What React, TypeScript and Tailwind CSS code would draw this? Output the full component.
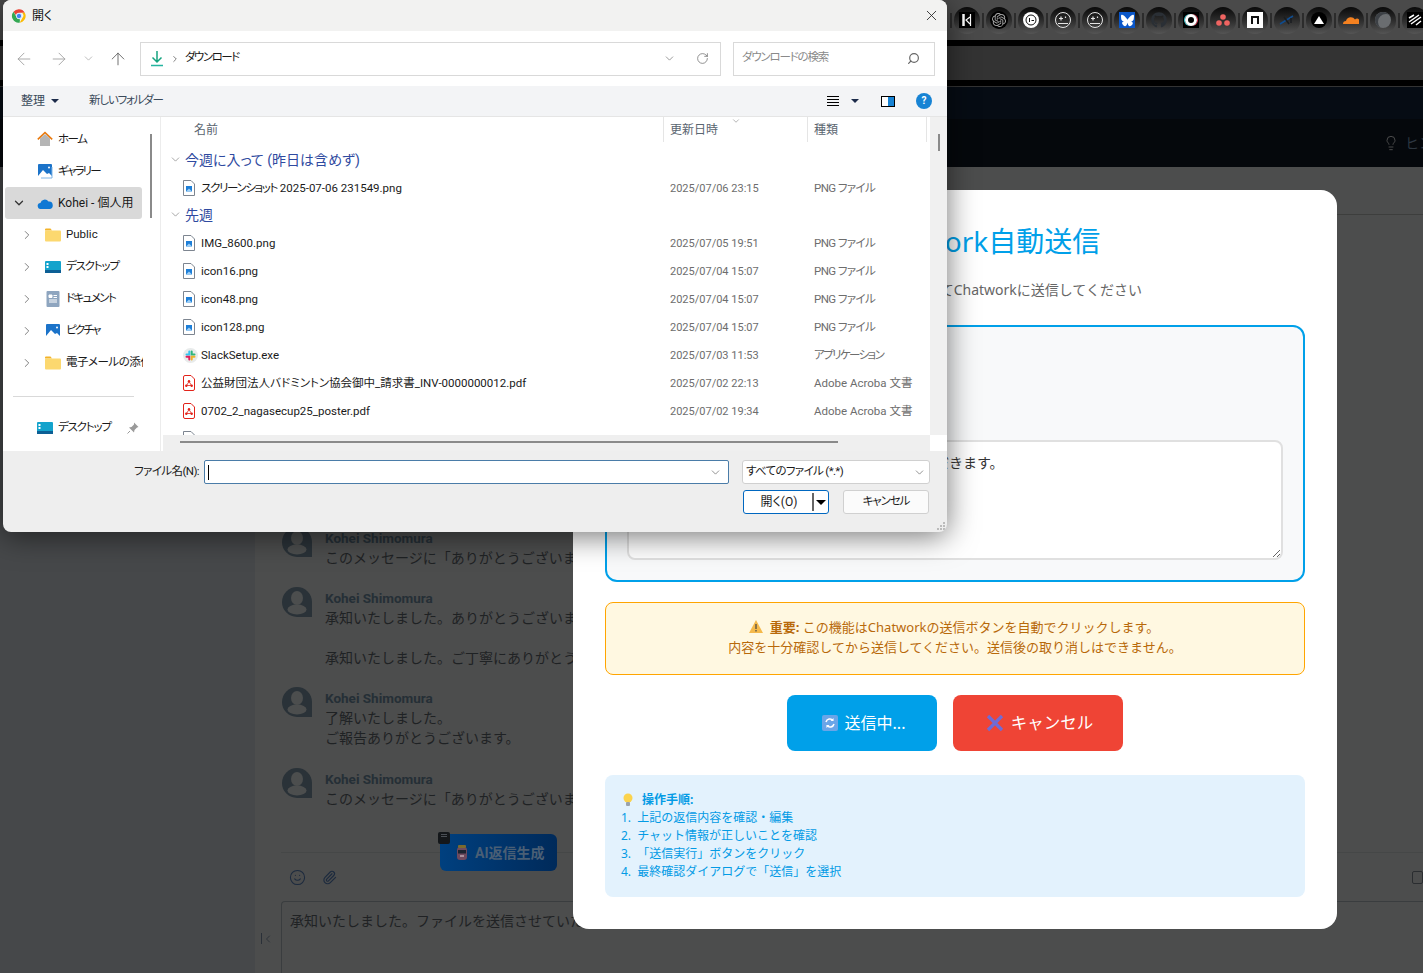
import React from 'react';
import { ArrowLeft, ArrowRight, ArrowUp, ChevronDown, ChevronRight, Lightbulb, Paperclip, RotateCw, Search, Smile, X } from 'lucide-react';
import { FaGithub } from 'react-icons/fa';
import { SiBluesky, SiOpenai } from 'react-icons/si';

const ChromeLogo = () => (
    <svg width="16" height="16" viewBox="0 0 48 48">
        <path d="M24 4a20 20 0 0 1 17.3 10H24a10 10 0 0 0-9.6 7L7.5 11.5A20 20 0 0 1 24 4z" fill="#ea4335" />
        <path d="M41.3 14A20 20 0 0 1 26 43.9L34 30a10 10 0 0 0-1.5-16z" fill="#fbbc04" />
        <path d="M26 43.9A20 20 0 0 1 7.5 11.5L16 26a10 10 0 0 0 11 7.5z" fill="#34a853" />
        <circle cx="24" cy="24" r="8" fill="#4285f4" stroke="#fff" strokeWidth="2" />
    </svg>
);

const DownloadIcon = () => (
    <svg width="14" height="16" viewBox="0 0 14 16" fill="none" stroke="#14a37f" strokeWidth="1.5">
        <path d="M7 0v11M2.5 6.5 7 11l4.5-4.5" />
        <path d="M1 14.5h12" stroke="#25b5a0" strokeWidth="1.6" />
    </svg>
);

const HomeIcon = () => (
    <svg width="16" height="16" viewBox="0 0 16 16">
        <path d="M3 7.5 8 3l5 4.5V15H3z" fill="#b5b5b5" />
        <path d="M.8 8.3 8 1.5l7.2 6.8" fill="none" stroke="#e8780c" strokeWidth="1.6" />
    </svg>
);

const PictureIcon = ({ frame = false }: { frame?: boolean }) => (
    <svg width="16" height="16" viewBox="0 0 16 16">
        <rect x="1" y="1" width="14" height="14" rx="1" fill="#1b73c9" />
        <path d="M1 13 6 7l4 4 2-1 3 3v2H1z" fill="#fff" />
        <circle cx="12" cy="4.5" r="1" fill="#fff" />
        {frame && <path d="M15 4v11H4" fill="none" stroke="#7fb5e6" strokeWidth="1" />}
    </svg>
);

const CloudIcon = () => (
    <svg width="16" height="11" viewBox="0 0 16 11">
        <path d="M4 11a3 3 0 0 1-.6-6A4.5 4.5 0 0 1 11.5 3.6 3.7 3.7 0 0 1 12.5 11z" fill="#0f78d4" />
    </svg>
);

const FolderIcon = () => (
    <svg width="16" height="14" viewBox="0 0 16 14">
        <path d="M0 1.5A1 1 0 0 1 1 .5h4.5l1.5 2H0z" fill="#f3b32a" />
        <rect y="2.5" width="16" height="11" rx="1" fill="#fcd86f" />
    </svg>
);

const DesktopIcon = () => (
    <svg width="16" height="12" viewBox="0 0 16 12">
        <rect width="16" height="11" rx="1" fill="#14a3cc" />
        <rect y="9" width="16" height="3" fill="#0c5f95" />
        <rect x="1.5" y="2" width="2" height="2" fill="#fff" />
        <rect x="1.5" y="5" width="2" height="2" fill="#fff" />
    </svg>
);

const DocumentIcon = () => (
    <svg width="14" height="16" viewBox="0 0 14 16">
        <rect width="13" height="16" rx="1" x=".5" fill="#8ea5bf" />
        <path d="M3 4h3v2.5H3zM7.5 4.5H11M7.5 6.500H11M3 9h8M3 11h8" stroke="#fff" strokeWidth="1" fill="#fff" />
    </svg>
);

const PinIcon = () => (
    <svg width="12" height="12" viewBox="0 0 12 12" fill="#9a9a9a">
        <path d="M7 .5 11.5 5l-1.5.5-2.5 2.5-.5 2.5-5-5L4.5 5 7 2.5z" />
        <path d="M3 9 .5 11.5" stroke="#9a9a9a" fill="none" />
    </svg>
);

const PngFile = () => (
    <svg width="12" height="16" viewBox="0 0 12 16" fill="none">
        <path d="M.5.5h7.5l3.5 3.5v11.5H.5z" fill="#fff" stroke="#7d8590" />
        <rect x="3" y="6" width="6" height="5.5" fill="#1e7fd8" />
        <path d="M3 11.5l3-3 3 3z" fill="#9fd0f5" />
    </svg>
);

const PdfFile = () => (
    <svg width="12" height="16" viewBox="0 0 12 16" fill="none">
        <path d="M2 .5h6l3.5 3.5v10a1.5 1.5 0 0 1-1.5 1.5H2A1.5 1.5 0 0 1 .5 14V2A1.5 1.5 0 0 1 2 .5z" fill="#fff" stroke="#e2231a" />
        <path d="M6 6.5 3.5 10.5M6 6.5l2.5 4M3.5 10.5h5" stroke="#e2231a" strokeWidth=".8" />
        <circle cx="6" cy="6.3" r="1.2" fill="#e2231a" />
        <circle cx="3.3" cy="10.7" r="1.2" fill="#e2231a" />
        <circle cx="8.7" cy="10.7" r="1.2" fill="#e2231a" />
    </svg>
);

const SlackFile = () => (
    <svg width="15" height="15" viewBox="0 0 15 15">
        <circle cx="7.5" cy="7.5" r="7.5" fill="#e8ebeb" />
        <path d="M6.3 3.5v3H3.5" stroke="#36c5f0" strokeWidth="2" fill="none" strokeLinecap="round" />
        <path d="M8.7 3.5v3h2.8" stroke="#2eb67d" strokeWidth="2" fill="none" strokeLinecap="round" />
        <path d="M6.3 11.5V8.7H3.5" stroke="#e01e5a" strokeWidth="2" fill="none" strokeLinecap="round" />
        <path d="M8.7 11.5V8.7h2.8" stroke="#ecb22e" strokeWidth="2" fill="none" strokeLinecap="round" />
    </svg>
);

const Avatar = () => (
    <svg width="30" height="30" viewBox="0 0 30 30" className="-mt-[2px] shrink-0">
        <path d="M15 0a15 15 0 0 1 15 15v15H15A15 15 0 0 1 15 0z" fill="#2a3238" />
        <ellipse cx="15" cy="11" rx="6" ry="7" fill="#4c4e4e" />
        <ellipse cx="15" cy="22.5" rx="9.5" ry="5" fill="#4c4e4e" />
    </svg>
);

const RefreshEmoji = () => (
    <svg width="16" height="16" viewBox="0 0 16 16" fill="none">
        <rect width="16" height="16" rx="2" fill="#6aa5e8" />
        <path d="M4 7a4 4 0 0 1 7-1.5M12 9a4 4 0 0 1-7 1.5" stroke="#fff" strokeWidth="1.5" />
        <path d="M11.5 3v3h-3M4.5 13v-3h3" fill="#fff" />
    </svg>
);

const CrossEmoji = () => (
    <svg width="18" height="18" viewBox="0 0 18 18">
        <path d="M2 2l14 14M16 2 2 16" stroke="#6f6bd6" strokeWidth="3.2" />
    </svg>
);

const WarnEmoji = () => (
    <svg width="14" height="13" viewBox="0 0 14 13">
        <path d="M7 0 14 13H0z" fill="#f5b94a" />
        <path d="M7 4v5M7 10v1.5" stroke="#444" strokeWidth="1.2" />
    </svg>
);

const BulbEmoji = () => (
    <svg width="10" height="14" viewBox="0 0 10 14">
        <circle cx="5" cy="5" r="4.5" fill="#fbd34d" />
        <rect x="3" y="9" width="4" height="4" rx="1" fill="#9aa3ad" />
    </svg>
);

const BotEmoji = () => (
    <svg width="14" height="17" viewBox="0 0 14 17">
        <rect x="2" y="3" width="10" height="13" rx="3" fill="#6e4a5e" />
        <rect x="3" y="6" width="8" height="3.5" fill="#1c2430" />
        <rect x="3" y="1" width="8" height="3" rx="1" fill="#7a6a2e" />
        <rect x="5" y="11" width="4" height="2" fill="#a8909c" />
    </svg>
);

const SparkleFace = () => (
    <svg width="16" height="16" viewBox="0 0 16 16" fill="none" stroke="#e5e5e5">
        <circle cx="8" cy="8" r="7.5" />
        <path d="M3 11.5h10" />
        <path d="M6 4.5v4M4 6.5h4" strokeWidth="1.2" />
        <path d="M10.5 4.5v1.5" strokeWidth="1.2" />
    </svg>
);

// toolbar icons in the browser bar, one glyph each
const barIcons: React.ReactNode[] = [
    <span key="n" className="flex h-4 w-4 items-center justify-center bg-black">
        <svg width="10" height="12" viewBox="0 0 10 12" fill="none" stroke="#fff"><path d="M1.5 0v12" strokeWidth="2.5" /><path d="M8.5 0v12M8 3 4 6l4 4" strokeWidth="1.2" /></svg>
    </span>,
    <span key="o" className="flex h-[18px] w-[18px] items-center justify-center rounded-full bg-black"><SiOpenai size={14} color="#a8a8a8" /></span>,
    <span key="w" className="flex h-4 w-4 items-center justify-center rounded-full bg-white">
        <svg width="12" height="12" viewBox="0 0 12 12" fill="none" stroke="#111"><circle cx="6" cy="6" r="5" /><path d="M4.5 4v4M6.5 6.5H9" /></svg>
    </span>,
    <SparkleFace key="s1" />,
    <SparkleFace key="s2" />,
    <span key="b" className="flex h-4 w-4 items-center justify-center bg-[#0a56c8]"><SiBluesky size={13} color="#fff" /></span>,
    <FaGithub key="g" size={16} color="#2a2f35" />,
    <span key="t" className="flex h-4 w-4 items-center justify-center bg-black">
        <span className="h-3 w-3 rounded-full border-[3px] border-white shadow-[1px_0_0_#e5364f,-1px_0_0_#3cd6e0]" />
    </span>,
    <svg key="a" width="14" height="12" viewBox="0 0 14 12" fill="#ef6461"><circle cx="7" cy="3" r="2.8" /><circle cx="3" cy="9" r="2.8" /><circle cx="11" cy="9" r="2.8" /></svg>,
    <span key="nn" className="flex h-4 w-4 items-center justify-center bg-white">
        <svg width="8" height="8" viewBox="0 0 8 8" fill="none" stroke="#111" strokeWidth="2"><path d="M1 8V1h6v7" /></svg>
    </span>,
    <svg key="x" width="16" height="10" viewBox="0 0 16 10" fill="none"><path d="M1 9 14 1" stroke="#0f4c8f" strokeWidth="1.5" /><path d="M5 2l5 7M12 3v5" stroke="#1a1d20" strokeWidth="1.5" /></svg>,
    <span key="v" className="flex h-4 w-4 items-center justify-center rounded-full bg-black">
        <span className="h-0 w-0 border-x-[5px] border-b-[8px] border-x-transparent border-b-white" />
    </span>,
    <svg key="c" width="16" height="8" viewBox="0 0 16 8"><path d="M0 8a3 3 0 0 1 3-3 5 5 0 0 1 9-1.5A3 3 0 0 1 16 8z" fill="#f48120" /></svg>,
    <span key="gl" className="h-4 w-4 rounded-full bg-[#6a6d70] shadow-[inset_3px_2px_0_#3c4045]" />,
    <span key="z" className="flex h-4 w-4 items-center justify-center bg-black">
        <svg width="14" height="12" viewBox="0 0 14 12" fill="none" stroke="#fff" strokeWidth="1.5"><path d="M1 4 6 1M1 8l10-7M3 10l10-7M8 11l5-4" /></svg>
    </span>,
];

const navItems = [
    { label: 'ホーム', icon: <HomeIcon />, tight: 'tracking-[-1.5px]' },
    { label: 'ギャラリー', icon: <PictureIcon frame />, tight: 'tracking-[-1.8px]' },
];

const treeItems = [
    { label: 'Public', icon: <FolderIcon />, tight: '' },
    { label: 'デスクトップ', icon: <DesktopIcon />, tight: 'tracking-[-1.2px]' },
    { label: 'ドキュメント', icon: <DocumentIcon />, tight: 'tracking-[-1.6px]' },
    { label: 'ピクチャ', icon: <PictureIcon />, tight: 'tracking-[-1.8px]' },
    { label: '電子メールの添付ファイル', icon: <FolderIcon />, tight: 'tracking-[-0.5px]' },
];

const pngType = { type: 'PNG ファイル', typeTight: 'tracking-[-0.6px]', icon: <PngFile /> };
const pdfType = { type: 'Adobe Acroba 文書', typeTight: '', icon: <PdfFile /> };

const thisWeek = [{ name: '231549.png', prefix: 'スクリーンショット', date: '2025/07/06 23:15', ...pngType }];

const lastWeek = [
    { name: 'IMG_8600.png', date: '2025/07/05 19:51', ...pngType },
    { name: 'icon16.png', date: '2025/07/04 15:07', ...pngType },
    { name: 'icon48.png', date: '2025/07/04 15:07', ...pngType },
    { name: 'icon128.png', date: '2025/07/04 15:07', ...pngType },
    { name: 'SlackSetup.exe', date: '2025/07/03 11:53', type: 'アプリケーション', typeTight: 'tracking-[-1.6px]', icon: <SlackFile /> },
    { name: '公益財団法人バドミントン協会御中_請求書_INV-0000000012.pdf', date: '2025/07/02 22:13', ...pdfType },
    { name: '0702_2_nagasecup25_poster.pdf', date: '2025/07/02 19:34', ...pdfType },
];

type FileItem = { name: string; prefix?: string; date: string; type: string; typeTight: string; icon: React.ReactNode };

const messages = [
    { lines: ['このメッセージに「ありがとうございます」とリアクションしました。'] },
    { lines: ['承知いたしました。ありがとうございます。', '\u00a0', '承知いたしました。ご丁寧にありがとうございます。'] },
    { lines: ['了解いたしました。', 'ご報告ありがとうございます。'] },
    { lines: ['このメッセージに「ありがとうございます」とリアクションしました。'] },
];

const steps = ['1. 上記の返信内容を確認・編集', '2. チャット情報が正しいことを確認', '3. 「送信実行」ボタンをクリック', '4. 最終確認ダイアログで「送信」を選択'];

const FileRow = ({ file }: { file: FileItem }) => (
    <div className="grid h-7 grid-cols-[500px_144px_120px] items-center">
        <div className="flex items-center whitespace-pre pl-5 text-[11.5px] text-[#1a1a1a]">
            <span className="flex w-[18px] shrink-0 justify-start">{file.icon}</span>
            <span className="pt-[2px]">
                {file.prefix && <span className="tracking-[-1.35px]">{file.prefix}</span>}
                {file.prefix && ' 2025-07-06 '}
                {file.name}
            </span>
        </div>
        <div className="pl-[7px] pt-[2px] text-[11px] text-[#6d6d6d]">{file.date}</div>
        <div className={`whitespace-nowrap pl-[7px] pt-[2px] text-[11.5px] text-[#6d6d6d] ${file.typeTight}`}>{file.type}</div>
    </div>
);

const GroupRow = ({ label }: { label: string }) => (
    <div className="flex h-[27px] items-center gap-[3px] pb-[2px] pl-[6px] text-sm text-[#2f4aa0]">
        <ChevronDown size={13} strokeWidth={1.2} className="text-[#777]" />
        {label}
    </div>
);

const FileDialog = () => (
    <div className="absolute left-[3px] top-0 flex h-[532px] w-[944px] flex-col overflow-hidden rounded-lg bg-[#eeeeee] font-['Roboto','Noto_Sans_CJK_JP',sans-serif] shadow-[0_4px_30px_rgba(0,0,0,0.55)] [font-feature-settings:'palt']">
        <div className="flex h-[31px] shrink-0 items-center justify-between bg-[#f2f2f1] pl-2 pr-[7px]">
            <div className="flex items-center gap-[5px] text-xs text-[#111]">
                <ChromeLogo />
                開く
            </div>
            <X size={17} strokeWidth={1.2} className="text-[#222]" />
        </div>

        <div className="flex h-[55px] shrink-0 items-center bg-white pl-[11px] pr-3">
            <ArrowLeft size={20} strokeWidth={1} className="text-[#9a9a9a]" />
            <ArrowRight size={20} strokeWidth={1} className="ml-[15px] text-[#9a9a9a]" />
            <ChevronDown size={13} strokeWidth={1.2} className="ml-[13px] text-[#9a9a9a]" />
            <ArrowUp size={20} strokeWidth={1} className="ml-[13px] text-[#555]" />
            <div className="ml-[12px] flex h-[34px] w-[581px] items-center border border-[#d9d9d9] pl-[9px] pr-[11px]">
                <DownloadIcon />
                <ChevronRight size={10} strokeWidth={1.8} className="ml-[6px] text-[#555]" />
                <span className="ml-[5px] pb-[2px] text-[11.5px] tracking-[-1.5px] text-[#1a1a1a]">ダウンロード</span>
                <ChevronDown size={13} strokeWidth={1.2} className="ml-auto text-[#666]" />
                <RotateCw size={13} strokeWidth={1.3} className="ml-5 text-[#666]" />
            </div>
            <div className="ml-3 flex h-[34px] w-[202px] items-center justify-between border border-[#d9d9d9] pl-2 pr-[14px] text-[11.5px] text-[#8a8a8a]">
                <span className="pb-[2px] tracking-[-1.2px]">ダウンロードの検索</span>
                <Search size={13} strokeWidth={2.2} className="scale-x-[-1] text-[#666]" />
            </div>
        </div>

        <div className="flex h-[31px] shrink-0 items-center border-b border-[#e5e5e5] bg-[#f3f4f6] pl-[18px] pr-[15px] text-xs text-[#3a4a5a]">
            <span>整理</span>
            <span className="ml-[6px] h-0 w-0 border-x-4 border-t-[4px] border-x-transparent border-t-[#1c2b4a]" />
            <span className="ml-[30px] text-[11.5px] tracking-[-1.2px]">新しいフォルダー</span>
            <div className="ml-auto flex items-center">
                <span className="flex w-[12px] flex-col gap-[2px]">
                    <span className="h-px bg-black" />
                    <span className="h-px bg-black" />
                    <span className="h-px bg-black" />
                    <span className="h-px bg-black" />
                </span>
                <span className="ml-[12px] h-0 w-0 border-x-4 border-t-[4px] border-x-transparent border-t-[#1c2b4a]" />
                <span className="ml-[22px] flex h-[11px] w-[14px] justify-end border border-black bg-white">
                    <span className="w-[6px] bg-[#1783d4]" />
                </span>
                <span className="ml-[21px] flex h-4 w-4 items-center justify-center rounded-full bg-[#1783d4] text-[10px] font-bold text-white">?</span>
            </div>
        </div>

        <div className="flex h-[334px] shrink-0 bg-white">
            <div className="w-[140px] shrink-0 overflow-hidden pl-[2px] pr-px pt-[6px]">
                {navItems.map((item) => (
                    <div key={item.label} className="flex h-8 items-center gap-[5px] pl-[32px] text-[11.5px] text-[#1a1a1a]">
                        {item.icon}
                        <span className={`pt-[2px] ${item.tight}`}>{item.label}</span>
                    </div>
                ))}
                <div className="flex h-8 items-center rounded-[3px] bg-[#d9d9d9] pl-[7px] text-xs text-[#1a1a1a]">
                    <ChevronDown size={14} strokeWidth={2.2} className="text-[#333]" />
                    <span className="ml-[11px] flex items-center gap-[5px] whitespace-nowrap"><CloudIcon /> Kohei - 個人用</span>
                </div>
                {treeItems.map((item) => (
                    <div key={item.label} className="flex h-8 items-center whitespace-nowrap pl-[15px] text-[11.5px] text-[#1a1a1a]">
                        <ChevronRight size={14} strokeWidth={1.6} className="shrink-0 text-[#777]" />
                        <span className="ml-[11px] flex w-4 shrink-0 justify-center">{item.icon}</span>
                        <span className={`ml-[5px] ${item.tight}`}>{item.label}</span>
                    </div>
                ))}
                <div className="ml-[8px] mr-[8px] mt-[17px] h-px bg-[#d9d9d9]" />
                <div className="mt-[15px] flex h-8 items-center gap-[5px] whitespace-nowrap pl-[32px] text-[11.5px] text-[#1a1a1a]">
                    <DesktopIcon />
                    <span className="tracking-[-1.2px]">デスクトップ</span>
                    <span className="ml-auto pr-[3px]"><PinIcon /></span>
                </div>
            </div>
            <div className="w-[17px] shrink-0 pl-[7px] pt-[17px]">
                <div className="h-[84px] w-[2px] bg-[#8a8a8a]" />
            </div>
            <div className="w-[3px] shrink-0 border-l border-[#ececec]" />
            <div className="flex min-w-0 flex-1 flex-col">
                <div className="min-h-0 flex-1 overflow-hidden">
                    <div className="grid h-[25px] grid-cols-[500px_144px_120px] text-xs text-[#5a6570]">
                        <div className="pl-[31px] pt-[5px]">名前</div>
                        <div className="relative border-l border-[#e5e5e5] pl-[6px] pt-[5px]">
                            更新日時
                            <ChevronDown size={10} strokeWidth={1.3} className="absolute right-[66px] -top-[1px] text-[#777]" />
                        </div>
                        <div className="border-x border-[#e5e5e5] pl-[6px] pt-[5px]">種類</div>
                    </div>
                    <div className="pt-[5px]">
                        <GroupRow label="今週に入って (昨日は含めず)" />
                        {thisWeek.map((file) => <FileRow key={file.name} file={file} />)}
                        <GroupRow label="先週" />
                        {lastWeek.map((file) => <FileRow key={file.name} file={file} />)}
                        <div className="flex h-7 items-center pl-5"><PngFile /></div>
                    </div>
                </div>
                <div className="h-4 shrink-0 bg-[#efefef] pl-[17px] pt-[6px]">
                    <div className="h-[2px] w-[658px] bg-[#8a8a8a]" />
                </div>
            </div>
            <div className="flex w-[17px] shrink-0 flex-col bg-[#f0f0f0]">
                <div className="ml-[8px] mt-[17px] h-[17px] w-[2px] bg-[#8a8a8a]" />
                <div className="mt-auto h-4 bg-white" />
            </div>
        </div>

        <div className="relative flex-1 pr-[17px] pt-[9px]">
            <div className="flex items-center justify-end">
                <span className="text-[11.5px] tracking-[-0.6px] text-[#1a1a1a]">ファイル名(N):</span>
                <div className="ml-[5px] flex h-6 w-[525px] items-center rounded-[2px] border border-[#4a7ca8] bg-white pl-[3px] pr-[6px]">
                    <span className="h-[15px] w-px bg-black" />
                    <ChevronDown size={13} strokeWidth={1.3} className="ml-auto text-[#666]" />
                </div>
                <div className="ml-[13px] flex h-6 w-[188px] items-center justify-between rounded-[3px] border border-[#d0d0d0] bg-white pl-[3px] pr-[3px] text-[11.5px] text-[#1a1a1a]">
                    <span className="tracking-[-0.65px]">すべてのファイル (*.*)</span>
                    <ChevronDown size={13} strokeWidth={1.3} className="text-[#666]" />
                </div>
            </div>
            <div className="mt-[6px] flex justify-end gap-[14px] pr-px">
                <div className="flex h-6 w-[86px] items-center rounded-[3px] border border-[#0067c0] bg-white text-xs text-[#1a1a1a]">
                    <span className="flex-1 pl-[2px] text-center">開く(O)</span>
                    <span className="h-[18px] w-[2px] bg-[#666]" />
                    <span className="mx-[2px] h-0 w-0 border-x-[5px] border-t-[5px] border-x-transparent border-t-black" />
                </div>
                <div className="flex h-6 w-[86px] items-center justify-center rounded-[3px] border border-[#d0d0d0] bg-[#fbfbfb] text-[11.5px] tracking-[-1.1px] text-[#1a1a1a]">キャンセル</div>
            </div>
            <div className="absolute bottom-[2px] right-[2px] grid grid-cols-3 gap-px">
                <span className="col-start-3 h-[2px] w-[2px] bg-[#bbb]" />
                <span className="col-start-2 h-[2px] w-[2px] bg-[#bbb]" />
                <span className="h-[2px] w-[2px] bg-[#bbb]" />
                <span className="h-[2px] w-[2px] bg-[#bbb]" />
                <span className="h-[2px] w-[2px] bg-[#bbb]" />
                <span className="h-[2px] w-[2px] bg-[#bbb]" />
            </div>
        </div>
    </div>
);

const SendModal = () => (
    <div className="absolute left-[573px] top-[190px] flex h-[739px] w-[764px] flex-col rounded-2xl bg-white px-8 pt-[30px]">
        <h2 className="pl-[10px] text-center text-[28px] font-normal leading-[42px] text-[#00a0e9]">🚀 Chatwork自動送信</h2>
        <p className="mt-[17px] pl-[4px] text-center text-sm leading-[21px] text-[#666]">返信内容をご確認・編集してChatworkに送信してください</p>
        <div className="mt-[25px] flex h-[257px] flex-col justify-end rounded-xl border-2 border-[#00a0e9] bg-[#f8f9fa] px-5 pb-5">
            <textarea
                readOnly
                defaultValue="承知いたしました。ファイルを送信させていただきます。"
                className="h-[120px] w-full rounded-lg border-2 border-[#e0e0e0] bg-white px-3 py-[10px] text-sm leading-[21px] text-[#333] outline-none"
            />
        </div>
        <div className="mt-5 flex h-[73px] flex-col items-center justify-center rounded-lg border border-[#ffa500] bg-[#fff8e1] pb-1 text-[13px] leading-5 text-[#b8690a]">
            <p className="flex items-center gap-[7px] pr-[2px]"><WarnEmoji /><span><strong>重要:</strong> この機能はChatworkの送信ボタンを自動でクリックします。</span></p>
            <p>内容を十分確認してから送信してください。送信後の取り消しはできません。</p>
        </div>
        <div className="mt-5 flex justify-center gap-4">
            <button className="flex h-14 w-[150px] items-center justify-center gap-[7px] rounded-lg bg-[#00a0e9] pl-[3px] text-base text-white">
                <RefreshEmoji /> 送信中...
            </button>
            <button className="flex h-14 w-[170px] items-center justify-center gap-[7px] rounded-lg bg-[#ef4435] pl-[3px] text-[16.5px] text-white">
                <CrossEmoji /> キャンセル
            </button>
        </div>
        <div className="mt-6 h-[122px] rounded-lg bg-[#e3f2fd] px-4 pt-4 text-xs leading-[18px] text-[#039be5]">
            <p className="flex items-center gap-[9px] pl-[2px] font-bold"><BulbEmoji /> 操作手順:</p>
            {steps.map((step) => <p key={step} className="[word-spacing:3px]">{step}</p>)}
        </div>
    </div>
);

const ChatBehind = () => (
    <div className="flex h-[973px] flex-col">
        <div className="flex h-10 shrink-0 items-center gap-[2px] overflow-hidden bg-[#4a4a4a] pl-[950px]">
            {barIcons.map((icon, i) => (
                <React.Fragment key={i}>
                    <span className="h-[15px] w-[2px] shrink-0 bg-[#2c2c2c]" />
                    <span className="flex h-[27px] w-[26px] shrink-0 items-center justify-center rounded-full bg-gradient-to-b from-[#0a0a0a] to-[#555]">
                        {icon}
                    </span>
                </React.Fragment>
            ))}
        </div>
        <div className="h-[6px] shrink-0 bg-black" />
        <div className="h-[34px] shrink-0 bg-[#333]" />
        <div className="h-[6px] shrink-0 bg-black" />
        <div className="h-[33px] shrink-0 border-t border-[#333] bg-[#060c14]" />
        <div className="flex h-12 shrink-0 items-center justify-end gap-[6px] bg-[#05080c] text-sm text-[#2c3640]">
            <Lightbulb size={16} strokeWidth={1.3} className="text-[#555]" />
            <span className="w-[18px] overflow-hidden whitespace-nowrap">ヒント</span>
        </div>
        <div className="flex min-h-0 flex-1">
            <div className="w-[255px] shrink-0 bg-[#46484a]" />
            <div className="relative flex min-w-0 flex-1 flex-col bg-[#4c4d4d]">
                <div className="h-[48px] shrink-0 border-b border-[#3d3e3d]" />
                <div className="flex flex-col gap-[21px] pl-[27px] pt-[314px]">
                    {messages.map((msg, i) => (
                        <div key={i} className={`flex gap-[13px] ${i === 2 ? 'mb-px' : ''}`}>
                            <Avatar />
                            <div className="min-w-0">
                                <div className="font-['Roboto',sans-serif] text-[13.5px] font-bold leading-[19px] text-[#252f36]">Kohei Shimomura</div>
                                {msg.lines.map((line, j) => (
                                    <div key={j} className="whitespace-nowrap text-sm leading-5 text-[#1f2224]">{line}</div>
                                ))}
                            </div>
                        </div>
                    ))}
                </div>
                <div className="ml-[26px] mt-[43px] flex h-[49px] items-center gap-4 border-t border-[#454747] pl-[8px]">
                    <Smile size={17} strokeWidth={1.5} className="text-[#1c2a3e]" />
                    <Paperclip size={15} strokeWidth={1.8} className="text-[#1c2a3e]" />
                    <span className="ml-auto h-[13px] w-[11px] rounded-[2px] border border-[#2a2d30]" />
                </div>
                <div className="flex min-h-0 flex-1">
                    <div className="flex w-[26px] shrink-0 items-center pl-[6px] pt-[3px] text-[#2a3038]">
                        <span className="h-[11px] w-px bg-[#2a3038]" />
                        <ChevronRight size={12} strokeWidth={1.8} className="rotate-180" />
                    </div>
                    <div className="flex-1 rounded-tl border-l border-t border-[#3a3d3f] px-2 pt-[9px] text-sm leading-5 text-[#202224]">
                        承知いたしました。ファイルを送信させていただきます。
                    </div>
                </div>
                <div className="absolute left-[185px] top-[667px] flex h-[37px] w-[117px] items-center gap-[6px] rounded-md bg-gradient-to-r from-[#00407f] to-[#002a5a] pl-[15px] font-['Roboto','Noto_Sans_CJK_JP',sans-serif] text-sm font-bold text-[#4a5f75]">
                    <BotEmoji /> AI返信生成
                    <span className="absolute -left-[2px] -top-[2px] flex h-3 w-3 flex-col items-center gap-px rounded-[2px] bg-[#14171a] pt-[2px]">
                        <span className="h-px w-[6px] bg-[#4a4f55]" />
                        <span className="h-px w-[6px] bg-[#4a4f55]" />
                    </span>
                </div>
            </div>
        </div>
    </div>
);

export default function App() {
    return (
        <div className="relative h-[973px] w-[1423px] overflow-hidden font-['Noto_Sans','Noto_Sans_CJK_JP',sans-serif]">
            <ChatBehind />
            <SendModal />
            <FileDialog />
        </div>
    );
}
